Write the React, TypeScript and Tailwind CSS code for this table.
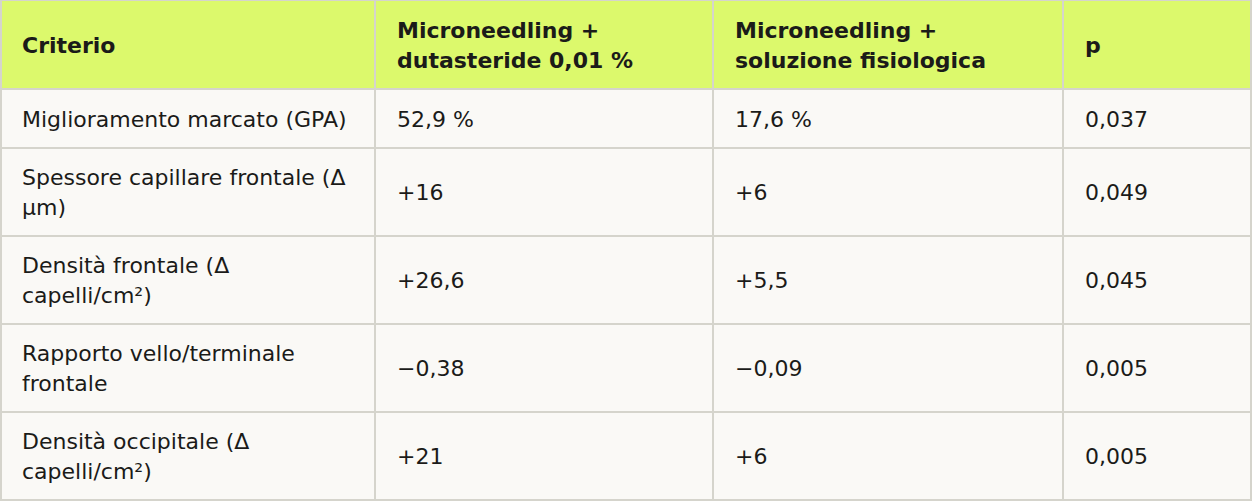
import React from 'react';

const headers = [
  'Criterio',
  'Microneedling + dutasteride 0,01 %',
  'Microneedling + soluzione fisiologica',
  'p',
];

// widths include the 2px right border of each cell
const widths = ['w-[374px]', 'w-[338px]', 'w-[350px]', 'w-[188px]'];

const rows: string[][] = [
  ['Miglioramento marcato (GPA)', '52,9 %', '17,6 %', '0,037'],
  ['Spessore capillare frontale (Δ µm)', '+16', '+6', '0,049'],
  ['Densità frontale (Δ capelli/cm²)', '+26,6', '+5,5', '0,045'],
  ['Rapporto vello/terminale frontale', '−0,38', '−0,09', '0,005'],
  ['Densità occipitale (Δ capelli/cm²)', '+21', '+6', '0,005'],
];

export default function App() {
  return (
    <div className="w-[1252px] bg-white font-['DejaVu_Sans',sans-serif] text-[#1b1b19]">
      <table className="w-[1252px] table-fixed border-separate border-spacing-0 border-l-2 border-t border-[#d5d4cc] text-[22px] leading-[30px]">
        <thead>
          <tr className="bg-[#dcf96c]">
            {headers.map((h, j) => (
              <th
                key={h}
                className={`${widths[j]} border-r-2 border-b-2 border-[#d5d4cc] ${
                  j === 0 ? 'pl-5' : 'pl-[21px]'
                } pr-5 pt-[15px] pb-[12px] text-left align-middle font-bold`}
              >
                {h}
              </th>
            ))}
          </tr>
        </thead>
        <tbody>
          {rows.map((r, i) => (
            <tr key={i} className="bg-[#faf9f6]">
              {r.map((c, j) => (
                <td
                  key={j}
                  className={`border-r-2 border-b-2 border-[#d5d4cc] ${
                    j === 0 ? 'pl-5' : 'pl-[21px]'
                  } pr-5 text-left align-middle ${
                    i === 0 ? 'pt-[14.5px] pb-[12.5px]' : 'pt-[14px] pb-[12px]'
                  }`}
                >
                  {c}
                </td>
              ))}
            </tr>
          ))}
        </tbody>
      </table>
    </div>
  );
}
